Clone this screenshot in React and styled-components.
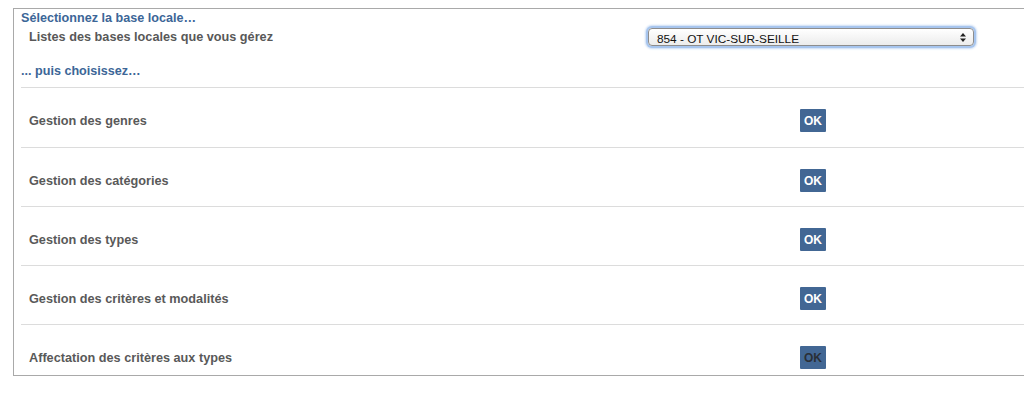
import React from 'react';
import styled, { createGlobalStyle } from 'styled-components';

const GlobalStyle = createGlobalStyle`
  html, body {
    margin: 0;
    padding: 0;
    background: #fff;
    overflow: hidden;
  }
  body {
    font-family: "Liberation Sans", Arial, Helvetica, sans-serif;
  }
`;

const Panel = styled.div`
  margin: 8px 0 0 13px;
  border: 1px solid #a9a9a9;
  border-right: none;
  padding: 1px 0 0 7px;
`;

const Heading = styled.div`
  font-size: 12.6px;
  font-weight: bold;
  line-height: 16px;
  color: #3c6697;
  margin-top: ${(p) => p.$top || 0}px;
`;

const SelectRow = styled.div`
  display: flex;
  align-items: center;
  height: 22px;
  padding-left: 8px;
`;

const SelectLabel = styled.div`
  width: 619px;
  font-size: 12.7px;
  font-weight: bold;
  color: #585858;
`;

const SelectBox = styled.div`
  position: relative;
  width: 324px;
  height: 16px;
  border: 1px solid #8d8d8d;
  border-radius: 4px;
  background: linear-gradient(#ffffff, #ececec);
  box-shadow: 0 0 0 2px #a7c5ee, 0 0 2px 3px #c9dcf5;
`;

const NativeSelect = styled.select`
  appearance: none;
  -webkit-appearance: none;
  width: 100%;
  height: 100%;
  border: none;
  background: transparent;
  outline: none;
  margin: 0;
  padding: 0 0 0 8px;
  font-family: "Liberation Sans", Arial, sans-serif;
  font-size: 11.8px;
  color: #111;
`;

const Arrows = styled.svg`
  position: absolute;
  right: 7px;
  top: 4px;
  pointer-events: none;
`;

const Divider = styled.div`
  margin-top: 8px;
  border-top: 1px solid #dcdcdc;
`;

const Row = styled.div`
  display: flex;
  align-items: center;
  border-top: 1px solid #dcdcdc;
  padding: 21px 0 14px 8px;
  &:first-child {
    border-top: none;
    padding-bottom: 15px;
  }
  &:last-child {
    padding-bottom: 6px;
  }
`;

const RowLabel = styled.div`
  width: 771px;
  font-size: 12.7px;
  font-weight: bold;
  color: #595959;
  padding-top: 1px;
`;

const OkButton = styled.button`
  width: 26px;
  height: 23px;
  padding: 0;
  border: none;
  border-radius: 1px;
  background: #426794;
  color: ${(p) => (p.$disabled ? '#2a2f36' : '#fff')};
  font-family: "Liberation Sans", Arial, sans-serif;
  font-size: 12px;
  font-weight: bold;
  cursor: pointer;
`;

const actions = [
  { label: 'Gestion des genres' },
  { label: 'Gestion des catégories' },
  { label: 'Gestion des types' },
  { label: 'Gestion des critères et modalités' },
  { label: 'Affectation des critères aux types', disabled: true },
];

export default function App() {
  return (
    <>
      <GlobalStyle />
      <Panel>
        <Heading>Sélectionnez la base locale…</Heading>
        <SelectRow>
          <SelectLabel>Listes des bases locales que vous gérez</SelectLabel>
          <SelectBox>
            <NativeSelect defaultValue="854">
              <option value="854">854 - OT VIC-SUR-SEILLE</option>
            </NativeSelect>
            <Arrows width="6" height="9" viewBox="0 0 6 9">
              <path d="M3 0 L6 3.5 H0 Z" fill="#222" />
              <path d="M3 9 L6 5.5 H0 Z" fill="#222" />
            </Arrows>
          </SelectBox>
        </SelectRow>
        <Heading $top={15}>... puis choisissez…</Heading>
        <Divider />
        <div>
          {actions.map((a) => (
            <Row key={a.label}>
              <RowLabel>{a.label}</RowLabel>
              <OkButton $disabled={a.disabled}>OK</OkButton>
            </Row>
          ))}
        </div>
      </Panel>
    </>
  );
}
